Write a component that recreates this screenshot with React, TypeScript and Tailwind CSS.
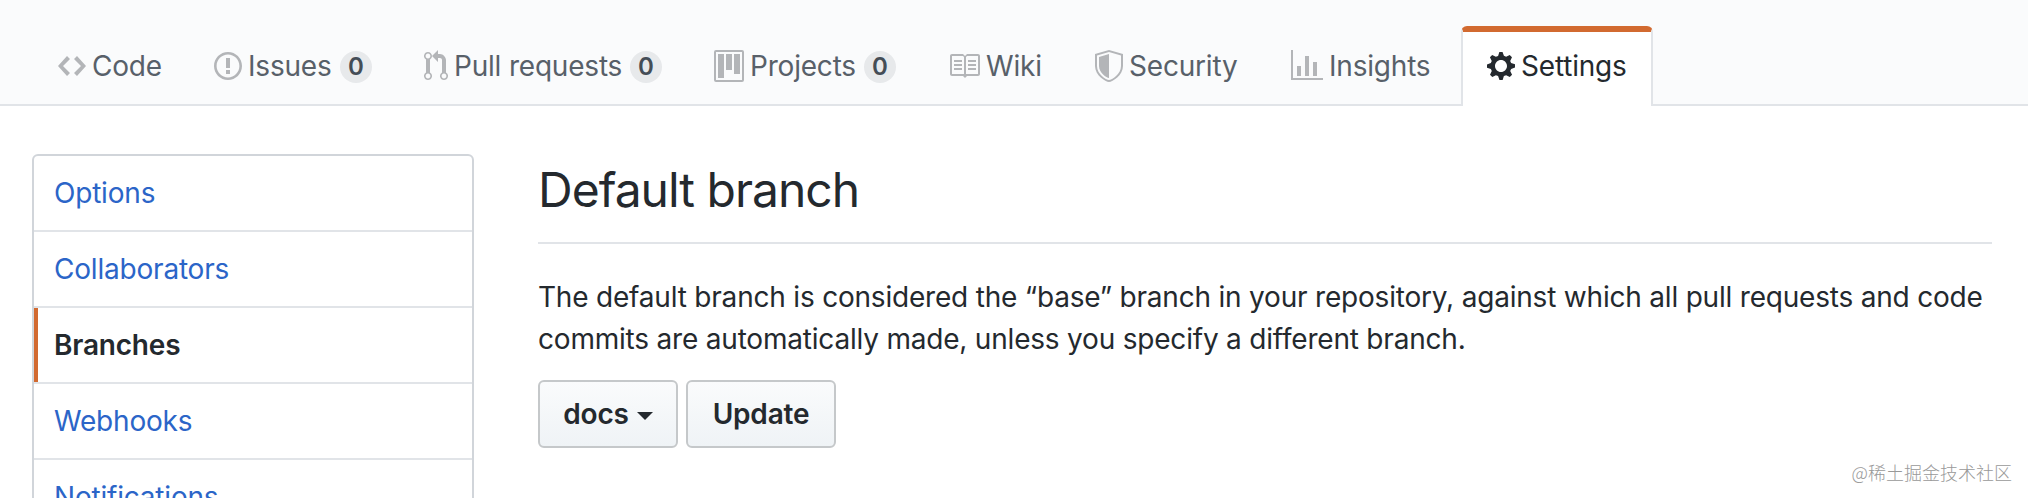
import type { ReactNode } from 'react';
import clsx from 'clsx';

interface OcticonProps {
  width: number;
  path: string;
}

interface Tab {
  label: string;
  icon: OcticonProps;
  className: string;
  labelClassName: string;
  count?: number;
  selected?: boolean;
}

const tabs: Tab[] = [
  {
    label: 'Code',
    className: 'w-[156px]',
    labelClassName: 'tracking-[-0.2px]',
    icon: {
      width: 14,
      path: 'M9.5 3L8 4.5 11.5 8 8 11.5 9.5 13 14 8 9.5 3zm-5 0L0 8l4.5 5L6 11.5 2.5 8 6 4.5 4.5 3z',
    },
  },
  {
    label: 'Issues',
    className: 'w-[210px]',
    labelClassName: 'tracking-[-0.2px]',
    count: 0,
    icon: {
      width: 14,
      path: 'M7 2.3c3.14 0 5.7 2.56 5.7 5.7s-2.56 5.7-5.7 5.7A5.71 5.71 0 011.3 8c0-3.14 2.56-5.7 5.7-5.7zM7 1C3.14 1 0 4.14 0 8s3.14 7 7 7 7-3.14 7-7-3.14-7-7-7zm1 3H6v5h2V4zm0 6H6v2h2v-2z',
    },
  },
  {
    label: 'Pull requests',
    className: 'w-[290px]',
    labelClassName: 'tracking-[-0.2px]',
    count: 0,
    icon: {
      width: 12,
      path: 'M11 11.28V5c-.03-.78-.34-1.47-.94-2.06C9.46 2.35 8.78 2.03 8 2H7V0L4 3l3 3V4h1c.27.02.48.11.69.31.21.2.3.42.31.69v6.28A1.993 1.993 0 0010 15a1.993 1.993 0 001-3.72zm-1 2.92c-.66 0-1.2-.55-1.2-1.2 0-.65.55-1.2 1.2-1.2.65 0 1.2.55 1.2 1.2 0 .65-.55 1.2-1.2 1.2zM4 3c0-1.11-.89-2-2-2a1.993 1.993 0 00-1 3.72v6.56A1.993 1.993 0 002 15a1.993 1.993 0 001-3.72V4.72c.59-.34 1-.98 1-1.72zm-.8 10c0 .66-.55 1.2-1.2 1.2-.65 0-1.2-.55-1.2-1.2 0-.65.55-1.2 1.2-1.2.65 0 1.2.55 1.2 1.2zM2 4.2C1.34 4.2.8 3.65.8 3c0-.65.55-1.2 1.2-1.2.65 0 1.2.55 1.2 1.2 0 .65-.55 1.2-1.2 1.2z',
    },
  },
  {
    label: 'Projects',
    className: 'w-[234px]',
    labelClassName: 'tracking-[-0.2px]',
    count: 0,
    icon: {
      width: 15,
      path: 'M10 12h3V2h-3v10zm-4-2h3V2H6v8zm-4 4h3V2H2v12zm-1 1h13V1H1v14zM14 0H1a1 1 0 00-1 1v14a1 1 0 001 1h13a1 1 0 001-1V1a1 1 0 00-1-1z',
    },
  },
  {
    label: 'Wiki',
    className: 'w-[147px]',
    labelClassName: 'tracking-[-0.2px]',
    icon: {
      width: 16,
      path: 'M3 5h4v1H3V5zm0 3h4V7H3v1zm0 2h4V9H3v1zm11-5h-4v1h4V5zm0 2h-4v1h4V7zm0 2h-4v1h4V9zm2-6v9c0 .55-.45 1-1 1H9.5l-1 1-1-1H2c-.55 0-1-.45-1-1V3c0-.55.45-1 1-1h5.5l1 1 1-1H15c.55 0 1 .45 1 1zm-8 .5L7.5 3H2v9h6V3.5zm7-.5H9.5l-.5.5V12h6V3z',
    },
  },
  {
    label: 'Security',
    className: 'w-[196px]',
    labelClassName: 'tracking-[-0.2px]',
    icon: {
      width: 14,
      path: 'M0 2l7-2 7 2v6.02C14 12.69 8.69 16 7 16c-1.69 0-7-3.31-7-7.98V2zm1 .75L7 1l6 1.75v5.268C13 12.104 8.449 15 7 15c-1.449 0-6-2.896-6-6.982V2.75zm1 .75L7 2v12c-1.207 0-5-2.482-5-5.985V3.5z',
    },
  },
  {
    label: 'Insights',
    className: 'w-[196px]',
    labelClassName: 'tracking-[-0.2px]',
    icon: {
      width: 16,
      path: 'M16 14v1H0V0h1v14h15zM5 13H3V8h2v5zm4 0H7V3h2v10zm4 0h-2V6h2v7z',
    },
  },
  {
    label: 'Settings',
    className: 'w-[192px]',
    labelClassName: 'tracking-[-0.2px]',
    selected: true,
    icon: {
      width: 14,
      path: 'M14 8.77v-1.6l-1.94-.64-.45-1.09.88-1.84-1.13-1.13-1.81.91-1.09-.45-.69-1.92h-1.6l-.63 1.94-1.11.45-1.84-.88-1.13 1.13.91 1.81-.45 1.09L0 7.23v1.59l1.94.64.45 1.09-.88 1.84 1.13 1.13 1.81-.91 1.09.45.69 1.92h1.59l.63-1.94 1.11-.45 1.84.88 1.13-1.13-.92-1.81.47-1.09L14 8.75v.02zM7 11c-1.66 0-3-1.34-3-3s1.34-3 3-3 3 1.34 3 3-1.34 3-3 3z',
    },
  },
];

const menuItems = ['Options', 'Collaborators', 'Branches', 'Webhooks', 'Notifications'];

const Octicon = ({ width, path }: OcticonProps) => (
  <svg
    width={width * 2}
    height={32}
    viewBox={`0 0 ${width} 16`}
    fill="currentColor"
    fillRule="evenodd"
    className="shrink-0"
    aria-hidden="true"
  >
    <path d={path} />
  </svg>
);

const TabItem = ({ tab }: { tab: Tab }) => (
  <a
    className={clsx(
      'flex h-20 shrink-0 items-center rounded-t-md border-x-2 border-t-6 pl-6 whitespace-nowrap',
      tab.className,
      tab.selected
        ? 'border-x-[#e1e4e8] border-t-[#d26a30] bg-white text-[#24292e]'
        : 'border-transparent text-[#586069]'
    )}
  >
    <span className={clsx('flex pb-[6px]', !tab.selected && 'text-[#b3b5b8]')}>
      <Octicon {...tab.icon} />
    </span>
    <span className={clsx('ml-[6px] pb-[6px]', tab.labelClassName)}>{tab.label}</span>
    {tab.count !== undefined && (
      <span className="mr-6 mb-1 ml-auto flex size-8 items-center justify-center rounded-full bg-[#e7e9eb] text-2xl font-semibold text-[#444d56]">
        {tab.count}
      </span>
    )}
  </a>
);

const Button = ({ className, children }: { className?: string; children: ReactNode }) => (
  <button
    type="button"
    className={clsx(
      'flex h-[68px] items-center justify-center rounded-md border-2 border-[#c5c8ca] bg-linear-to-b from-[#fafbfc] to-[#eff3f6] pb-px font-semibold',
      className
    )}
  >
    {children}
  </button>
);

export default function App() {
  return (
    <div className="relative h-[498px] w-[2028px] overflow-hidden bg-white font-[Inter,'Liberation_Sans',sans-serif] text-[28px] leading-[42px] text-[#24292e]">
      <header className="h-[106px] border-b-2 border-[#e1e4e8] bg-[#fafbfc] pt-[26px] pl-8">
        <nav className="flex">
          {tabs.map((tab) => (
            <TabItem key={tab.label} tab={tab} />
          ))}
        </nav>
      </header>

      <div className="flex items-start gap-16 pt-12 pr-9 pl-8">
        <aside className="w-[442px] shrink-0 rounded-md border-2 border-[#d1d5da]">
          {menuItems.map((item) => (
            <a
              key={item}
              className={clsx(
                'flex h-[76px] items-center border-b-2 border-[#e1e4e8] pl-5',
                item === 'Branches'
                  ? 'font-semibold shadow-[inset_4px_0_0_#d26a30] tracking-[-0.2px]'
                  : 'text-[#2b65c8] tracking-[-0.2px]'
              )}
            >
              {item}
            </a>
          ))}
        </aside>

        <main className="min-w-0 grow">
          <h2 className="border-b-2 border-[#e1e4e8] pb-4 text-5xl leading-[72px] tracking-[-1px]">Default branch</h2>
          <p className="mt-8 whitespace-nowrap">
            <span className="tracking-[-0.2px]">
              The default branch is considered the “base” branch in your repository, against which all pull requests and
              code
            </span>
            <br />
            <span className="tracking-[-0.2px]">
              commits are automatically made, unless you specify a different branch.
            </span>
          </p>
          <div className="mt-5 flex gap-2">
            <Button className="w-[140px]">
              <span className="tracking-[-0.2px]">docs</span>
              <span className="mt-1 ml-2 border-x-8 border-t-8 border-x-transparent border-t-[#24292e]" />
            </Button>
            <Button className="w-[150px]">
              <span className="tracking-[-0.2px]">Update</span>
            </Button>
          </div>
        </main>
      </div>

      <div className="absolute right-4 bottom-3 font-['Noto_Sans_CJK_SC',sans-serif] text-lg leading-7 font-light text-[#999999]">
        @稀土掘金技术社区
      </div>
    </div>
  );
}
